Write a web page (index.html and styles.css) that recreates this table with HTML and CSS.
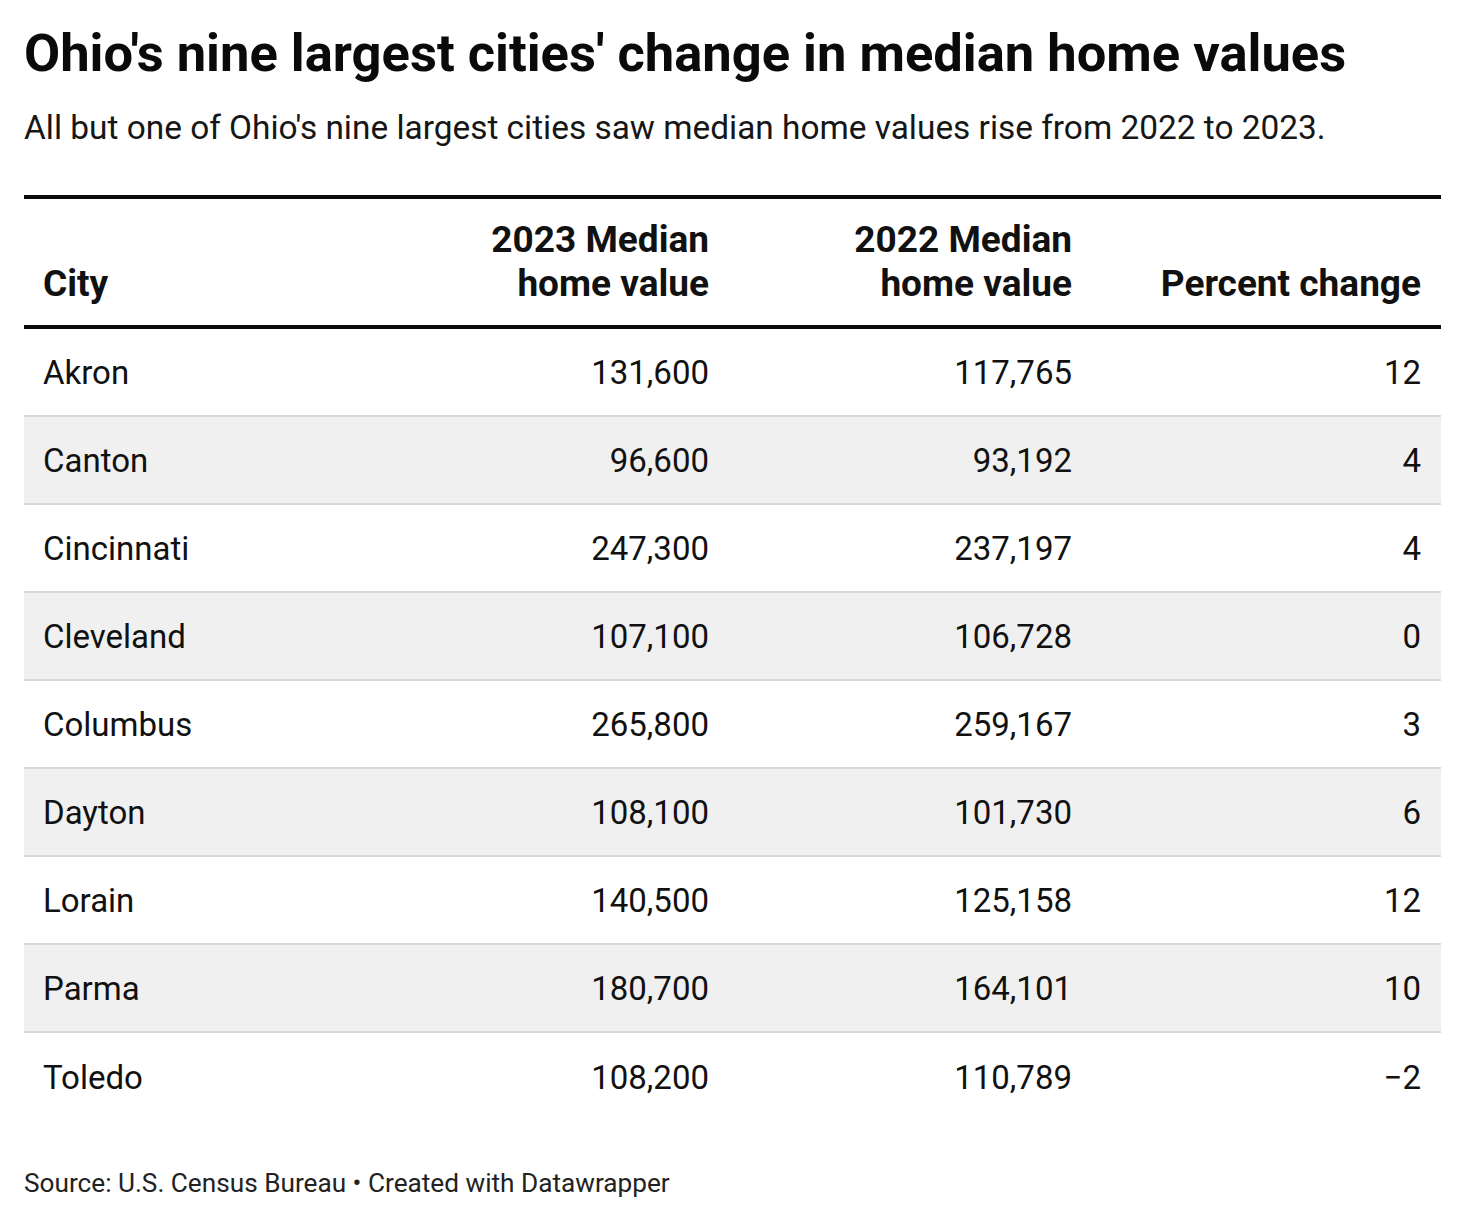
FILE: index.html
```html
<!DOCTYPE html>
<html lang="en">
<head>
<meta charset="utf-8">
<title>Ohio's nine largest cities' change in median home values</title>
<link rel="stylesheet" href="styles.css">
</head>
<body>
<div class="chart">
  <h1 class="title">Ohio's nine largest cities' change in median home values</h1>
  <p class="subtitle">All but one of Ohio's nine largest cities saw median home values rise from 2022 to 2023.</p>
  <div class="table">
    <div class="row head">
      <div class="cell city">City</div>
      <div class="cell num">2023 Median<br>home value</div>
      <div class="cell num">2022 Median<br>home value</div>
      <div class="cell num">Percent change</div>
    </div>
    <div class="row"><div class="cell city">Akron</div><div class="cell num">131,600</div><div class="cell num">117,765</div><div class="cell num">12</div></div>
    <div class="row alt"><div class="cell city">Canton</div><div class="cell num">96,600</div><div class="cell num">93,192</div><div class="cell num">4</div></div>
    <div class="row"><div class="cell city">Cincinnati</div><div class="cell num">247,300</div><div class="cell num">237,197</div><div class="cell num">4</div></div>
    <div class="row alt"><div class="cell city">Cleveland</div><div class="cell num">107,100</div><div class="cell num">106,728</div><div class="cell num">0</div></div>
    <div class="row"><div class="cell city">Columbus</div><div class="cell num">265,800</div><div class="cell num">259,167</div><div class="cell num">3</div></div>
    <div class="row alt"><div class="cell city">Dayton</div><div class="cell num">108,100</div><div class="cell num">101,730</div><div class="cell num">6</div></div>
    <div class="row"><div class="cell city">Lorain</div><div class="cell num">140,500</div><div class="cell num">125,158</div><div class="cell num">12</div></div>
    <div class="row alt"><div class="cell city">Parma</div><div class="cell num">180,700</div><div class="cell num">164,101</div><div class="cell num">10</div></div>
    <div class="row last"><div class="cell city">Toledo</div><div class="cell num">108,200</div><div class="cell num">110,789</div><div class="cell num">−2</div></div>
  </div>
  <p class="footer">Source: U.S. Census Bureau • Created with Datawrapper</p>
</div>
</body>
</html>
```

FILE: styles.css
```css
html, body {
  margin: 0;
  padding: 0;
  background: #ffffff;
}

body {
  font-family: Roboto, "Liberation Sans", sans-serif;
  color: #111111;
}

.chart {
  width: 1417px;
  padding: 0 24px;
}

.title {
  margin: 0;
  padding-top: 22px;
  font-size: 52.5px;
  line-height: 62px;
  font-weight: 700;
  color: #0a0a0a;
  letter-spacing: 0;
}

.subtitle {
  margin: 24px 0 0;
  font-size: 33.4px;
  line-height: 40px;
  font-weight: 400;
  color: #161616;
}

.table {
  margin-top: 47px;
  border-top: 4px solid #0a0a0a;
}

.row {
  display: grid;
  grid-template-columns: 342px 363px 363px 349px;
  height: 88px;
  border-bottom: 2px solid #d8d8d8;
  box-sizing: border-box;
  align-items: center;
  font-size: 33px;
}

.row.alt {
  background: #f0f0f0;
}

.row.last {
  border-bottom: none;
}

.row.head {
  height: auto;
  align-items: end;
  border-bottom: 4px solid #0a0a0a;
  font-weight: 700;
  font-size: 37px;
  line-height: 44px;
  padding: 19px 0 19px;
}

.cell {
  padding: 0 20px 0 19px;
}

.cell.num {
  text-align: right;
}

.footer {
  margin: 47px 0 0;
  font-size: 26.2px;
  line-height: 30px;
  color: #222222;
}
```
